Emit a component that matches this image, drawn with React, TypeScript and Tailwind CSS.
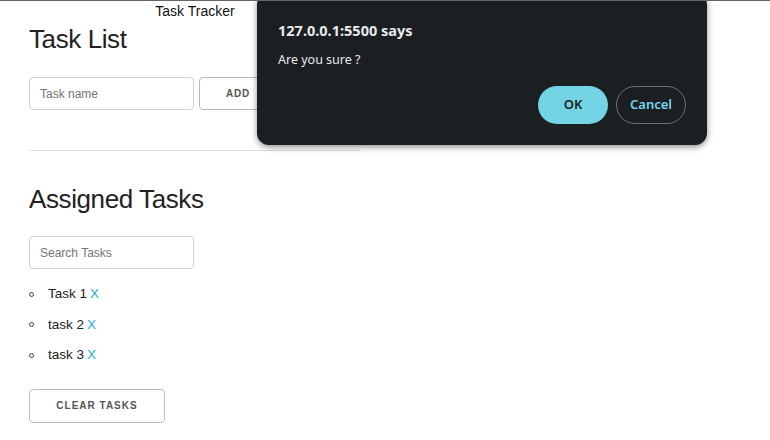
import React from "react";

const arial = { fontFamily: '"Liberation Sans", Arial, sans-serif' };
const noto = { fontFamily: '"Noto Sans", "Open Sans", sans-serif' };

function Bullet() {
  return <span className="inline-block w-[5px] h-[5px] rounded-full border border-[#444] shrink-0" />;
}

export default function App() {
  const tasks = ["Task 1", "task 2", "task 3"];
  return (
    <div className="relative w-[770px] h-[440px] overflow-hidden bg-white border-t border-[#666]" style={arial}>
      <div className="ml-[29px] w-[332px] text-[#222]">
        <div className="h-[20px] leading-[20px] text-[14px] text-center text-[#111]">Task Tracker</div>
        <h1 className="mt-[3px] h-[30px] leading-[30px] text-[26px] tracking-[-0.4px]">Task List</h1>
        <div className="mt-[23px] flex gap-[5px]">
          <input
            className="w-[165px] h-[33px] border border-[#d1d1d1] rounded-[4px] px-[10px] text-[12px] placeholder:text-[#757575] outline-none"
            placeholder="Task name"
          />
          <button className="w-[78px] h-[33px] border border-[#bbb] rounded-[4px] text-[10px] font-bold tracking-[0.8px] text-[#555]">
            ADD
          </button>
        </div>
        <div className="mt-[40px] border-t border-[#e1e1e1]" />
        <h2 className="mt-[33px] h-[30px] leading-[30px] text-[26px] tracking-[-0.4px]">Assigned Tasks</h2>
        <input
          className="mt-[22px] block w-[165px] h-[33px] border border-[#d1d1d1] rounded-[4px] px-[10px] text-[12px] placeholder:text-[#757575] outline-none"
          placeholder="Search Tasks"
        />
        <ul className="mt-[10px]">
          {tasks.map((t) => (
            <li key={t} className="flex items-center h-[30.5px] text-[13.5px]">
              <span className="w-[19px] flex"><Bullet /></span>
              <span>{t}</span>
              <span className="ml-[3px] text-[#1eaedb]">X</span>
            </li>
          ))}
        </ul>
        <button className="mt-[18px] w-[136px] h-[34px] border border-[#bbb] rounded-[4px] text-[10px] font-bold tracking-[1px] text-[#555]">
          CLEAR TASKS
        </button>
      </div>

      <div
        className="absolute left-[257px] top-[-8px] w-[450px] h-[152px] rounded-[12px] bg-[#1b1f21] shadow-[0_2px_6px_rgba(0,0,0,0.45)] px-[21px] pt-[27px]"
        style={noto}
      >
        <div className="text-[14.5px] font-bold text-[#e8eaed] leading-[20px]">127.0.0.1:5500 says</div>
        <div className="mt-[11px] text-[12.5px] text-[#e8eaed] leading-[18px]">Are you sure ?</div>
        <div className="absolute right-[21px] bottom-[21px] flex gap-[8px]">
          <button className="w-[70px] h-[38px] rounded-full bg-[#72d4e5] text-[#1b1f21] text-[13px] font-semibold">OK</button>
          <button className="w-[70px] h-[38px] rounded-full border border-[#6b7275] text-[#78d7ec] text-[13px] font-semibold">Cancel</button>
        </div>
      </div>
    </div>
  );
}
